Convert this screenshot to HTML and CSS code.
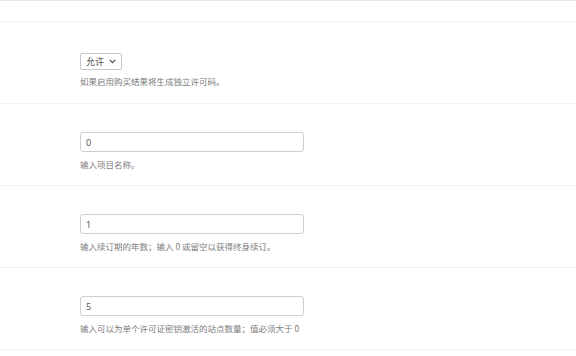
FILE: index.html
```html
<!DOCTYPE html>
<html lang="zh-CN">
<head>
<meta charset="utf-8">
<link rel="stylesheet" href="styles.css">
</head>
<body>
<div class="page">
  <div class="top"></div>
  <div class="row row-first">
    <div class="select"><span class="sel-text">允许</span><svg class="chev" width="7" height="5" viewBox="0 0 7 5"><path d="M0.8 1 L3.5 3.7 L6.2 1" fill="none" stroke="#555" stroke-width="1.2"/></svg></div>
    <p class="help">如果启用购买结果将生成独立许可码。</p>
  </div>
  <div class="row">
    <input class="field" type="text" value="0">
    <p class="help">输入项目名称。</p>
  </div>
  <div class="row">
    <input class="field" type="text" value="1">
    <p class="help">输入续订期的年数；输入 0 或留空以获得终身续订。</p>
  </div>
  <div class="row">
    <input class="field" type="text" value="5">
    <p class="help">输入可以为单个许可证密钥激活的站点数量；值必须大于 0</p>
  </div>
</div>
</body>
</html>
```
FILE: styles.css
```css
html, body {
  margin: 0;
  padding: 0;
  background: #ffffff;
}
body {
  font-family: "Noto Sans", "Noto Sans CJK SC", sans-serif;
  color: #333;
}
.page {
  display: flex;
  flex-direction: column;
}
.top {
  height: 20px;
  border-top: 1px solid #e9e9e9;
  border-bottom: 1px solid #f1f1f1;
}
.row {
  display: flex;
  flex-direction: column;
  align-items: flex-start;
  padding: 28px 0 15px 80px;
  border-bottom: 1px solid #f1f1f1;
}
.row-first {
  padding-top: 31px;
  padding-bottom: 16px;
}
.select {
  box-sizing: border-box;
  height: 17px;
  width: 42px;
  border: 1px solid #c8c8c8;
  border-radius: 2px;
  display: flex;
  align-items: center;
  gap: 5px;
  padding: 0 4px 0 5px;
  white-space: nowrap;
  font-family: "Noto Sans CJK SC", sans-serif;
  font-size: 9px;
  line-height: 15px;
  color: #555;
}
.sel-text {
  flex: none;
}
.chev {
  display: block;
  flex: none;
}
.row-first .help {
  margin-top: 5px;
}
.field {
  box-sizing: border-box;
  width: 224px;
  height: 20px;
  margin: 0;
  border: 1px solid #cfcfcf;
  border-radius: 3px;
  padding: 0 5px;
  font-family: "Noto Sans", sans-serif;
  font-size: 9px;
  color: #555;
  background: #fff;
  outline: none;
}
.help {
  margin: 6px 0 0 0;
  font-family: "Noto Sans CJK SC", sans-serif;
  font-size: 8.5px;
  line-height: 12px;
  color: #7c7c7c;
  white-space: nowrap;
}
```
